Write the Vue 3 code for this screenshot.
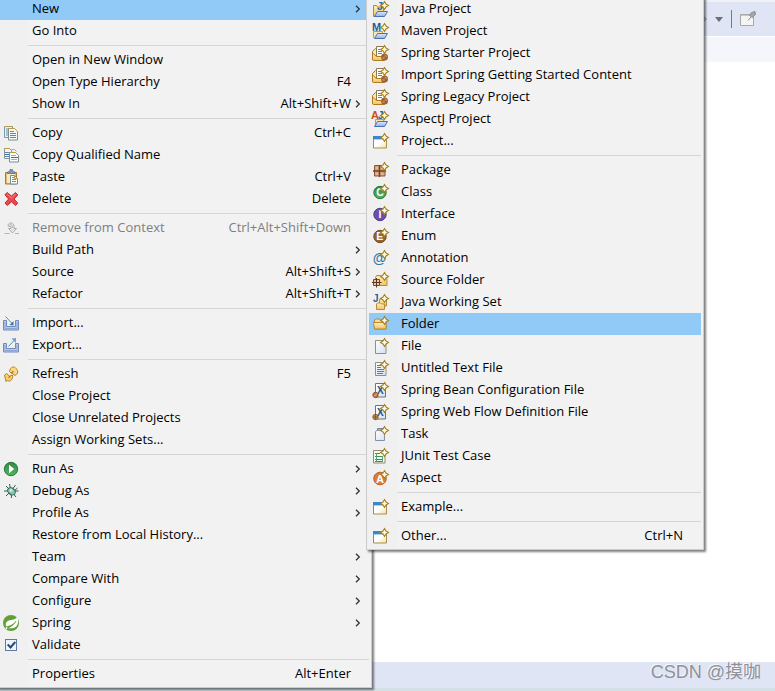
<script setup>
const star =
  '<path d="M12.500 .5 14 3 16.500 4.500 14 6l-1.500 2.500L11 6 8.500 4.500 11 3z" fill="#fffbe3" stroke="#a9821e" stroke-width="1.100"/>'

const letter = (ch, x, y, size, color) =>
  `<text x="${x}" y="${y}" font-family="Liberation Sans, sans-serif" font-weight="bold" font-size="${size}" fill="${color}">${ch}</text>`

const openFolder =
  '<path d="M2.500 15.500 5.500 10.500h10l-3 5z" fill="url(#g-blue)" stroke="#4a6fb5"/>'

const springProject =
  '<path d="M.5 14.500V6.500l3-3 2 1v9z" fill="#fbe7a6" stroke="#b3791d"/>' +
  '<path d="M4.500 11.500v-10h8v10z" fill="#fff" stroke="#8a7a52"/>' +
  '<path d="M6 4.500h4M6 6.500h4M6 8.500h4" stroke="#5f83b5"/>' +
  '<path d="M.5 15V8l4 3.500h8v4h-11z" fill="url(#g-gold)" stroke="#b3791d"/>' +
  '<circle cx="12.500" cy="12" r="3.500" fill="#9a6236"/><path d="M10.500 14l4-4M10 11.500l2.500 2.500M12.500 9.500l2.500 2.500" stroke="#d5a06e" stroke-width=".7"/>' +
  star

const windowNew =
  '<path d="M1.500 4.500h13v10.500h-13z" fill="url(#g-cream)" stroke="#a58f55"/>' +
  '<path d="M1 3h11v3H1z" fill="#3f86c8"/><path d="M2 6.500h10" stroke="#a9d2f0"/><path d="M1.500 6v9" stroke="#6d8fae"/>' +
  star

const page = '<path d="M3.500 2.500h8l2.500 2.500v10.500H3.500z" fill="url(#g-page)" stroke="#8f8f88"/>'

const disc = (fill, edge, ch) =>
  `<circle cx="8" cy="8.500" r="6.200" fill="${fill}" stroke="${edge}"/>` +
  letter(ch, ch === 'I' ? 6.5 : 4.3, 12.3, 10.5, '#fff') +
  star

const beanFile = (bean, extra) =>
  '<path d="M3.500 1.500h10v13.500h-10z" fill="url(#g-page)" stroke="#77736a"/>' +
  letter('X', 5, 12, 10, '#24507c') +
  `<circle cx="3.500" cy="13" r="2.700" fill="${bean}" stroke="#7b4823" stroke-width=".8"/>` +
  extra +
  star

const icons = {
  copy:
    '<path d="M1.500 1.500h8v11h-8z" fill="#e7eef2" stroke="#7e9aa6"/><path d="M1.500 1.500h8" stroke="#b79b57"/><path d="M3 4h2M3 6h2M3 8h2M3 10h2" stroke="#6c93b8"/>' +
    '<path d="M5.500 3.500h6l3 3v8.500h-9z" fill="#f5f9fc" stroke="#7e8f8f"/><path d="M5.500 3.500h6l3 3" fill="none" stroke="#bc9a48"/><path d="M7 6.500h4M7 8.500h6M7 10.500h6M7 12.500h6" stroke="#5b87b5"/>',
  copyName:
    '<path d="M1.500 1.500h5l2 2v8h-7z" fill="#f3f6f8" stroke="#8b9596"/><path d="M1.500 1.500h5l2 2" fill="none" stroke="#bc9a48"/><path d="M2 5.500h5M2 9.500h4" stroke="#5b87b5"/><path d="M8.500 2.500h3l2 2" fill="none" stroke="#c4a75c"/>' +
    '<path d="M6.500 5.500h6l3 3v6.500h-9z" fill="#f6fafc" stroke="#7e8f8f"/><path d="M6.500 5.500h6l3 3" fill="none" stroke="#bc9a48"/><path d="M8 8.500h5M8 12.500h6" stroke="#8fb2d2"/><path d="M2 7.500h4M8 10.500h7" stroke="#416fa5"/>',
  paste:
    '<path d="M2.500 3.500h11v11.500h-11z" fill="#e6b565" stroke="#ac7a32"/><path d="M4 5h8v9H4z" fill="#f8e9c6"/>' +
    '<path d="M4.500 4.500V3l2-.5.500-2h2.500l.500 2 2 .5v1.500z" fill="#8494b7" stroke="#596a92" stroke-width=".7"/>' +
    '<path d="M7.500 6.500h4l3 3v5.500h-7z" fill="#f9fcff" stroke="#788d91"/><path d="M9 8.500h2M9 10.500h4M9 12.500h4" stroke="#6690bc"/><path d="M11.500 6.500v3h3" fill="none" stroke="#bc9a48"/>',
  remove:
    '<path d="m4 1.500-2 2.300 3.600 4.200L2 12l2.200 2.500L8.500 10.800l4 3.700 2.300-2.300L11 8l3.800-4-2.300-2.500-4 3.500z" fill="#e9484c" stroke="#c9292f" stroke-linejoin="round"/><path d="m4 3 4.500 4L12.500 3" fill="none" stroke="#f58c8b"/>',
  context:
    '<path d="M1.500 13.500h5M12 13.500h4" stroke="#b2b2b2"/><path d="M5 6c0-4 5-4 6-.5v3h2.500l-4 4.500-4-4.500H8V6.500z" fill="#e6e6e6" stroke="#ababab"/><path d="M6.500 5c2-1.500 3 0 3 3" fill="none" stroke="#bababa"/>',
  import:
    '<path d="M.5 5.500h3v6h9v-6h3v9.500H.5z" fill="#b8c9e9" stroke="#7289bd"/><path d="M2 7v6.500h12V7" fill="none" stroke="#8fa6d4"/><path d="M2.500 1.500 9.500 9" stroke="#4d92b8"/><path d="M10.500 10.500V6l-4 4z" fill="#317da8"/>',
  export:
    '<path d="M.5 6.500h3v5h9v-5h3V15H.5z" fill="#b8c9e9" stroke="#7289bd"/><path d="M2 8v5.500h12V8" fill="none" stroke="#8fa6d4"/><path d="M5.500 9.500 11.500 3" stroke="#4d92b8"/><path d="M13 1v5L8.500 1.500z" fill="#69a4c6"/>',
  refresh:
    '<path d="M6.500 5.500C7 .5 11.500 0 13 2.500c1.500 1 2 3 1.500 5L12 9.500 8.500 6.500 10.500 6C10 4.500 8.500 5 8.500 7.500z" fill="#f9d98a" stroke="#bd8019"/>' +
    '<path d="M9.500 9c1 4-2.500 7.500-5 5.500L3 15.500 1.500 9l2-1.500L7 10.500 5.500 11c.5 1.500 1.500.500 1.500-1z" fill="#f6cf73" stroke="#bd8019"/>',
  run:
    '<circle cx="8" cy="8" r="6.700" fill="url(#g-green)" stroke="#267c3b"/><path d="M6 3.800v8.500L11.200 8z" fill="#fff"/>',
  debug:
    '<path d="M8 8 3 3M8 8l5 6M8 8 6.500 1M8 8l4.500-6M8 8H1M8 8h7.500M8 8l-5 5M8 8l.500 7M11 8l3.500-3" stroke="#2b5e62"/>' +
    '<ellipse cx="8.500" cy="8.300" rx="4.200" ry="3.200" transform="rotate(40 8.500 8.300)" fill="#8dc3a6" stroke="#28685a"/><circle cx="8" cy="7.500" r="1.400" fill="#d9efd5"/>',
  spring:
    '<circle cx="8" cy="8" r="8" fill="#5fa134"/><path d="M14.500 1.500c.7 3.500 1.200 7-1 9.700-2.200 2.500-5.700 2-9.500 2C7.800 12 10.800 10 12.500 7 9.500 9.800 6.500 10.700 3.500 11.500 1.500 8.500 3.800 5.700 7 5.200 10.500 4.700 12.800 4.300 14.500 1.500z" fill="#fff"/><path d="M4 13.200c4-1.500 7-3.500 9-7" fill="none" stroke="#5fa134"/><circle cx="3.500" cy="13" r=".9" fill="#fff"/>',
  java:
    '<path d="M1.500 13V4.500h3l1 1.500h6v5H6l-3.500 4.500h-1z" fill="url(#g-gold)" stroke="#b98a33"/>' + openFolder +
    letter('J', 5, 9, 11, '#2d6494') + star,
  maven:
    '<path d="M1.500 15V8.500h9v2" fill="#fae7ad" stroke="#c29b45"/>' + openFolder + letter('M', 0, 8, 11, '#1f5d91') + star,
  springProject,
  aspectj:
    '<path d="M3.500 15V8.500h8v2" fill="#fae7ad" stroke="#c29b45"/>' + openFolder +
    letter('A', -1, 8, 11, '#c9501c') + letter('J', 6, 8, 10, '#2d6494') + star,
  windowNew,
  package:
    '<path d="M2.500 3.500h10.500v10.500h-10.500z" fill="#d7a47f" stroke="#8d5536"/><path d="M7.500 3v12M1 9h13" stroke="#764028" stroke-width="1.500"/><path d="M4 6h2M9 6h2M4 12h2M9 12h2" stroke="#efcdb1"/>' + star,
  class: disc('url(#g-green)', '#227b37', 'C'),
  interface: disc('#6b52a8', '#4d3b8e', 'I'),
  enum: disc('#966330', '#774a1d', 'E'),
  annotation: letter('@', 0.7, 12.5, 14, '#3378a6') + star,
  sourceFolder:
    '<path d="M3.500 13.500V5.500l1-2h4l1 2h5.500v8z" fill="url(#g-gold)" stroke="#b98a33"/>' +
    '<path d="M1.500 7.500h6v6h-6z" fill="#e9c6a3" stroke="#7b482a"/><path d="M4.500 6v9.500M0 10.500h9.500" stroke="#5e3520"/>' + star,
  workingSet:
    letter('J', 1, 8, 10, '#2d6494') +
    '<path d="M7.500 12V6l1-1h3l1 1h2v6z" fill="url(#g-gold)" stroke="#b98a33"/><path d="M4.500 15.500V10l1-1h3l1 1h3v5.500z" fill="url(#g-gold)" stroke="#b98a33"/>' + star,
  folder:
    '<path d="M2.500 13v-9l1-1h4l1.500 2h5v8z" fill="#f7dda1" stroke="#b38635"/><path d="M1.500 6.500h12.500v6.500H2.500z" fill="url(#g-gold)" stroke="#b98a33"/>' + star,
  file: page + star,
  textFile: page + '<path d="M5 5.500h4M5 7.500h4M5 9.500h7M5 11.500h7M5 13.500h6" stroke="#5579b3"/>' + star,
  bean: beanFile('#c27645', '<path d="m2 14.500 3-3" stroke="#edb78e"/>'),
  flow: beanFile('#c59a4c', '<path d="M1 13h5M3.500 10.500v5" stroke="#6d5425" stroke-width=".8"/>'),
  task:
    '<path d="M5.500 2.500h7v10h-7z" fill="#9ab7dc" stroke="#6884b0"/><path d="M3.500 5.500 5 4.500h7.500v10h-9z" fill="url(#g-page)" stroke="#8791a4"/>' + star,
  junit:
    '<path d="M1.500 2.500h11.500v12.500h-11.500z" fill="#f3fbf3" stroke="#8f8c6f"/><path d="M3 5.500h5M3 8.500h8M3 11.500h8M3 13.500h8" stroke="#3a8e5c"/><path d="M4.500 5v8.500M10.500 8v6" stroke="#55a573"/>' + star,
  aspect:
    '<circle cx="8" cy="8.500" r="6.300" fill="#db7b3c" stroke="#c25e23"/>' + letter('A', 4, 12.5, 11, '#fff') + star,
}

const sep = { sep: true }

const contextMenu = [
  { label: 'New', more: true, active: true },
  { label: 'Go Into' },
  sep,
  { label: 'Open in New Window' },
  { label: 'Open Type Hierarchy', keys: 'F4' },
  { label: 'Show In', keys: 'Alt+Shift+W', more: true },
  sep,
  { label: 'Copy', keys: 'Ctrl+C', icon: 'copy' },
  { label: 'Copy Qualified Name', icon: 'copyName' },
  { label: 'Paste', keys: 'Ctrl+V', icon: 'paste' },
  { label: 'Delete', keys: 'Delete', icon: 'remove' },
  sep,
  { label: 'Remove from Context', keys: 'Ctrl+Alt+Shift+Down', icon: 'context', disabled: true },
  { label: 'Build Path', more: true },
  { label: 'Source', keys: 'Alt+Shift+S', more: true },
  { label: 'Refactor', keys: 'Alt+Shift+T', more: true },
  sep,
  { label: 'Import...', icon: 'import' },
  { label: 'Export...', icon: 'export' },
  sep,
  { label: 'Refresh', keys: 'F5', icon: 'refresh' },
  { label: 'Close Project' },
  { label: 'Close Unrelated Projects' },
  { label: 'Assign Working Sets...' },
  sep,
  { label: 'Run As', icon: 'run', more: true },
  { label: 'Debug As', icon: 'debug', more: true },
  { label: 'Profile As', more: true },
  { label: 'Restore from Local History...' },
  { label: 'Team', more: true },
  { label: 'Compare With', more: true },
  { label: 'Configure', more: true },
  { label: 'Spring', icon: 'spring', more: true },
  { label: 'Validate', check: true },
  sep,
  { label: 'Properties', keys: 'Alt+Enter' },
]

const newMenu = [
  { label: 'Java Project', icon: 'java' },
  { label: 'Maven Project', icon: 'maven' },
  { label: 'Spring Starter Project', icon: 'springProject' },
  { label: 'Import Spring Getting Started Content', icon: 'springProject' },
  { label: 'Spring Legacy Project', icon: 'springProject' },
  { label: 'AspectJ Project', icon: 'aspectj' },
  { label: 'Project...', icon: 'windowNew' },
  sep,
  { label: 'Package', icon: 'package' },
  { label: 'Class', icon: 'class' },
  { label: 'Interface', icon: 'interface' },
  { label: 'Enum', icon: 'enum' },
  { label: 'Annotation', icon: 'annotation' },
  { label: 'Source Folder', icon: 'sourceFolder' },
  { label: 'Java Working Set', icon: 'workingSet' },
  { label: 'Folder', icon: 'folder', active: true },
  { label: 'File', icon: 'file' },
  { label: 'Untitled Text File', icon: 'textFile' },
  { label: 'Spring Bean Configuration File', icon: 'bean' },
  { label: 'Spring Web Flow Definition File', icon: 'flow' },
  { label: 'Task', icon: 'task' },
  { label: 'JUnit Test Case', icon: 'junit' },
  { label: 'Aspect', icon: 'aspect' },
  sep,
  { label: 'Example...', icon: 'windowNew' },
  sep,
  { label: 'Other...', keys: 'Ctrl+N', icon: 'windowNew' },
]

const menus = [
  { name: 'context', items: contextMenu },
  { name: 'new', items: newMenu },
]
</script>

<template>
  <div class="workbench">
    <svg class="defs" width="0" height="0" aria-hidden="true">
      <defs>
        <linearGradient id="g-gold" x1="0" y1="0" x2="0" y2="1">
          <stop offset="0" stop-color="#fdf0c0" /><stop offset="1" stop-color="#efc364" />
        </linearGradient>
        <linearGradient id="g-blue" x1="0" y1="0" x2="0" y2="1">
          <stop offset="0" stop-color="#dbe9fb" /><stop offset="1" stop-color="#8fb2ea" />
        </linearGradient>
        <linearGradient id="g-page" x1="0" y1="0" x2="1" y2="1">
          <stop offset="0" stop-color="#ffffff" /><stop offset="1" stop-color="#d3e1f5" />
        </linearGradient>
        <linearGradient id="g-cream" x1="0" y1="0" x2="1" y2="1">
          <stop offset="0.5" stop-color="#ffffff" /><stop offset="1" stop-color="#f6dd93" />
        </linearGradient>
        <linearGradient id="g-green" x1="0" y1="0" x2="0" y2="1">
          <stop offset="0" stop-color="#2f8a47" /><stop offset="1" stop-color="#57b45f" />
        </linearGradient>
      </defs>
    </svg>

    <header class="toolbar">
      <svg class="nav" width="8" height="14" viewBox="0 0 8 14" aria-hidden="true">
        <path d="M1 1.500 7.500 7 1 12.500z" fill="#c9cbcf" stroke="#9c9ea3" />
      </svg>
      <svg width="8" height="5" viewBox="0 0 8 5" aria-hidden="true">
        <path d="M0 0h8L4 5z" fill="#6b6d73" />
      </svg>
      <span class="divider"></span>
      <svg width="16" height="16" viewBox="0 0 16 16" aria-hidden="true">
        <path d="M.5 3.500h13v11H.5z" fill="#f4f4f4" stroke="#a9a9a9" />
        <path d="M1 4.500h9" stroke="#c8c8c8" />
        <path d="M8 9.500 11 6" stroke="#8c8c8c" />
        <path d="m9.500 4.500 2-3 3.500-1 .5 3-3 3z" fill="#a6a6a6" stroke="#8e8e8e" />
      </svg>
    </header>
    <div class="tabs"></div>
    <main class="editor"></main>
    <footer class="status"><span class="mark">CSDN @摸咖</span></footer>
    <div class="edge"></div>

    <div v-for="menu in menus" :key="menu.name" class="menu" :class="menu.name" role="menu">
      <template v-for="(item, i) in menu.items" :key="i">
        <hr v-if="item.sep" class="rule" />
        <label v-else-if="item.check" class="item">
          <span class="icon"><input class="check" type="checkbox" checked /></span>
          <span class="label">{{ item.label }}</span>
        </label>
        <button
          v-else
          type="button"
          role="menuitem"
          class="item"
          :class="{ active: item.active }"
          :disabled="item.disabled"
        >
          <span class="icon">
            <svg v-if="item.icon" width="16" height="16" viewBox="0 0 16 16" fill="none" overflow="visible" aria-hidden="true" v-html="icons[item.icon]"></svg>
          </span>
          <span class="label">{{ item.label }}</span>
          <span class="keys">{{ item.keys }}</span>
          <svg v-if="item.more" class="more" width="6" height="8" viewBox="0 0 6 8" aria-hidden="true">
            <path d="M1 .7 4.300 4 1 7.300" fill="none" stroke="#333" stroke-width="1.300" />
          </svg>
        </button>
      </template>
    </div>
  </div>
</template>

<style>
body {
  margin: 0;
}
</style>

<style scoped>
.workbench {
  position: relative;
  display: flex;
  flex-direction: column;
  height: 100vh;
  overflow: hidden;
  background: #fff;
  font-family: "Open Sans", "Noto Sans", "Noto Sans CJK SC", sans-serif;
  font-size: 13px;
  color: #000;
}

.defs {
  position: absolute;
}

.toolbar {
  display: flex;
  align-items: center;
  justify-content: flex-end;
  gap: 8px;
  height: 34px;
  padding-right: 19px;
  border-top: 2px solid #f0f1f4;
  background: #e0e5f5;
}

.divider {
  width: 1px;
  height: 18px;
  background: #77797f;
}

.tabs {
  height: 25px;
  border-top: 1px solid #fff;
  background: #f4f6fc;
}

.editor {
  flex: 1;
}

.status {
  display: flex;
  align-items: flex-start;
  justify-content: flex-end;
  height: 26px;
  padding-right: 14px;
  background: #e0e5f5;
}

.mark {
  font-family: "Liberation Sans", "Noto Sans CJK SC", sans-serif;
  font-size: 18px;
  line-height: 20px;
  color: #8f9198;
  text-shadow: -1px -1px 0 #f4f6fb;
}

.edge {
  height: 3px;
  background: #d3e0e6;
}

.menu {
  position: absolute;
  top: -5px;
  box-sizing: border-box;
  padding: 2px;
  border: 1px solid #ccc;
  background: linear-gradient(90deg, #f0f0f0 30px, #f2f2f2 30px);
  box-shadow: 2px 2px 2px rgba(0, 0, 0, 0.5);
}

.context {
  left: -3px;
  min-width: 375px;
}

.new {
  left: 366px;
  min-width: 338px;
}

.item {
  position: relative;
  box-sizing: border-box;
  display: flex;
  align-items: center;
  width: 100%;
  height: 22px;
  margin: 0;
  padding: 0 18px 0 3px;
  border: 0;
  background: none;
  font: inherit;
  line-height: 20px;
  color: inherit;
  text-align: left;
  white-space: nowrap;
}

.item.active {
  background: #91c9f7;
}

.item:disabled {
  color: #7f7f7f;
}

.icon {
  display: flex;
  align-items: center;
  justify-content: center;
  width: 16px;
  height: 16px;
  margin-right: 13px;
}

.label {
  flex: 1;
}

.label,
.keys {
  padding-bottom: 2px;
}

.more {
  position: absolute;
  right: 8px;
}

.rule {
  height: 1px;
  margin: 3px 0 3px 28px;
  border: 0;
  background: #d6d6d6;
}

.check {
  appearance: none;
  width: 12px;
  height: 12px;
  margin: 0;
  border: 1px solid #5f7ba5;
  background: #eef6fd;
}

.check:checked::before {
  content: "";
  display: block;
  width: 3px;
  height: 6px;
  margin-left: 3px;
  border: solid #2d4a78;
  border-width: 0 2px 2px 0;
  transform: rotate(42deg);
}
</style>
